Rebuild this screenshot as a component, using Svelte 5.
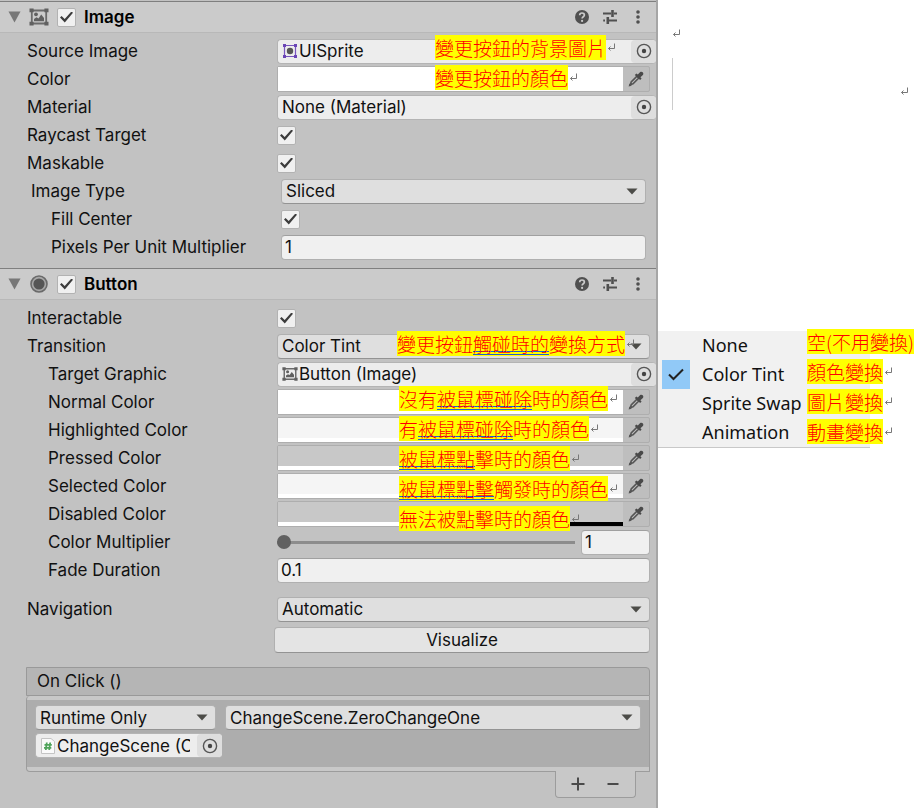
<script>
  let imageEnabled = true;
  let buttonEnabled = true;
  let raycastTarget = true;
  let maskable = true;
  let fillCenter = true;
  let interactable = true;

  let imageType = 'Sliced';
  let pixelsPerUnit = '1';
  let transition = 'Color Tint';
  let multiplier = 1;
  let fadeDuration = '0.1';
  let navigation = 'Automatic';
  let callState = 'Runtime Only';
  let callTarget = 'ChangeScene.ZeroChangeOne';

  const transitions = ['None', 'Color Tint', 'Sprite Swap', 'Animation'];

  const colors = [
    { name: 'Normal Color', value: '#ffffff', alpha: 100 },
    { name: 'Highlighted Color', value: '#f5f5f5', alpha: 100 },
    { name: 'Pressed Color', value: '#c8c8c8', alpha: 100 },
    { name: 'Selected Color', value: '#f5f5f5', alpha: 100 },
    { name: 'Disabled Color', value: '#c8c8c8', alpha: 50 }
  ];

  // each note is [plain, underlined, plain]
  const imageNotes = [
    ['變更按鈕的背景圖片', '', ''],
    ['變更按鈕的顏色', '', '']
  ];
  const transitionNotes = [['變更按鈕', '觸碰時的', '變換方式']];
  const colorNotes = [
    ['沒有', '被鼠標碰除', '時的顏色'],
    ['有', '被鼠標碰除', '時的顏色'],
    ['', '被鼠標點', '擊時的顏色'],
    ['', '被鼠標點擊', '觸發時的顏色'],
    ['無法被點擊時的顏色', '', '']
  ];
  const menuNotes = [
    ['空(不用變換)', '', ''],
    ['顏色變換', '', ''],
    ['圖片變換', '', ''],
    ['動畫變換', '', '']
  ];
</script>

{#snippet returnMark()}
  <svg class="mark" width="8" height="9" viewBox="0 0 8 9" aria-hidden="true">
    <path d="M7.5 0.5V5.5H1.5M3.5 3.5L1.5 5.5L3.5 7.5" />
  </svg>
{/snippet}

{#snippet notes(list, place)}
  <ul class="notes {place}">
    {#each list as [before, marked, after]}
      <li>
        <span class="note">{before}{#if marked}<u>{marked}</u>{/if}{after}</span>{@render returnMark()}
      </li>
    {/each}
  </ul>
{/snippet}

{#snippet arrow()}
  <svg class="arrow" width="12" height="7" viewBox="0 0 12 7" aria-hidden="true">
    <path d="M0.5 0.5H11.5L6 6.5Z" />
  </svg>
{/snippet}

{#snippet picker(name)}
  <button class="picker" aria-label={name}>
    <svg width="16" height="16" viewBox="0 0 16 16">
      <circle cx="8" cy="8" r="6.6" fill="none" stroke="#555" stroke-width="1.4" />
      <circle cx="8" cy="8" r="2.2" fill="#444" />
    </svg>
  </button>
{/snippet}

{#snippet dropper(name)}
  <button class="dropper" aria-label={name}>
    <svg width="16" height="16" viewBox="0 0 16 16">
      <path d="M9 5.2L10.8 7L5 12.8L2.4 13.6L3.2 11Z" fill="none" stroke="#555" stroke-width="1.6" />
      <path d="M0.6 15.6L1.4 12.4L3.8 14.8Z" fill="#555" />
      <path d="M6.8 3.9L8.4 2.4L9.8 3.6L12.2 1.1C13.8 -0.4 16.4 2 14.9 3.9L12.4 6.2L13.6 7.6L12.1 9.1Z" fill="#4a4a4a" />
    </svg>
  </button>
{/snippet}

{#snippet imageIcon(size)}
  <svg width={size} height={size} viewBox="0 0 20 20" aria-hidden="true">
    <path d="M3 3.5H17M3 16.5H17M2.8 4V16M17.2 4V16" stroke="#6a6a6a" stroke-width="1.8" />
    <path d="M0.5 1.5H4.6V5.2H0.5ZM15.4 1.5H19.5V5.2H15.4ZM0.5 14.8H4.6V18.5H0.5ZM15.4 14.8H19.5V18.5H15.4Z" fill="#606060" />
    <circle cx="7" cy="7.3" r="1.9" fill="#606060" />
    <path d="M5 14.2V12L7.5 10.2L9.5 11.4L12.2 7.4L15 11V14.2Z" fill="#606060" />
  </svg>
{/snippet}

{#snippet tools(name)}
  <div class="tools">
    <button aria-label="{name} help">
      <svg width="16" height="16" viewBox="0 0 16 16">
        <circle cx="8" cy="8" r="7" fill="#505050" />
        <path d="M5.7 6.3C5.7 3.2 10.4 3.3 10.4 6.1C10.4 7.8 8.1 7.7 8.1 9.6" fill="none" stroke="#cbcbcb" stroke-width="1.7" />
        <circle cx="8.1" cy="11.9" r="1.1" fill="#cbcbcb" />
      </svg>
    </button>
    <button aria-label="{name} presets">
      <svg width="16" height="16" viewBox="0 0 16 16">
        <path d="M1 4.5H9M12 4.5H15M1.2 11.5H3M7 11.5H15" stroke="#505050" stroke-width="1.8" />
        <path d="M10.5 1V8M5.8 8V15" stroke="#505050" stroke-width="2.6" />
      </svg>
    </button>
    <button aria-label="{name} menu">
      <svg width="16" height="16" viewBox="0 0 16 16">
        <circle cx="8" cy="3" r="1.8" fill="#505050" />
        <circle cx="8" cy="8" r="1.8" fill="#505050" />
        <circle cx="8" cy="13" r="1.8" fill="#505050" />
      </svg>
    </button>
  </div>
{/snippet}

{#snippet foldout(name)}
  <button class="foldout" aria-label="Fold {name}">
    <svg width="13" height="12" viewBox="0 0 13 12"><path d="M0.5 0.5H12.5L6.5 11.5Z" fill="#777" /></svg>
  </button>
{/snippet}

<div class="page">
  <main class="inspector">
    <section>
      <header>
        {@render foldout('Image')}
        {@render imageIcon(20)}
        <input type="checkbox" id="image-enabled" bind:checked={imageEnabled} />
        <h2><label for="image-enabled">Image</label></h2>
        {@render tools('Image')}
      </header>

      <div class="body">
        <div class="row">
          <span class="label">Source Image</span>
          <div class="object">
            <svg width="16" height="16" viewBox="0 0 16 16" aria-hidden="true">
              <path d="M2.5 2.5H13.5V13.5H2.5Z" fill="none" stroke="#7a55c0" stroke-width="1.2" />
              <path d="M1 1H4V4H1ZM12 1H15V4H12ZM1 12H4V15H1ZM12 12H15V15H12Z" fill="#6a45b5" />
              <circle cx="8" cy="8" r="3.2" fill="#555" />
            </svg>
            <span class="object-name">UISprite</span>
            {@render picker('Pick source image')}
          </div>
        </div>
        <div class="row">
          <span class="label">Color</span>
          <div class="color">
            <button class="swatch" aria-label="Color" style="background: #ffffff"></button>
            {@render dropper('Sample color')}
          </div>
        </div>
        <div class="row">
          <span class="label">Material</span>
          <div class="object">
            <span class="object-name">None (Material)</span>
            {@render picker('Pick material')}
          </div>
        </div>
        <div class="row">
          <label for="raycast">Raycast Target</label>
          <input type="checkbox" id="raycast" bind:checked={raycastTarget} />
        </div>
        <div class="row">
          <label for="maskable">Maskable</label>
          <input type="checkbox" id="maskable" bind:checked={maskable} />
        </div>
        <div class="row inset">
          <label for="image-type">Image Type</label>
          <div class="select">
            <select id="image-type" bind:value={imageType}>
              <option>Sliced</option>
            </select>
            {@render arrow()}
          </div>
        </div>
        <div class="row inset">
          <label class="child" for="fill-center">Fill Center</label>
          <input type="checkbox" id="fill-center" bind:checked={fillCenter} />
        </div>
        <div class="row inset">
          <label class="child" for="ppu">Pixels Per Unit Multiplier</label>
          <input type="text" id="ppu" bind:value={pixelsPerUnit} />
        </div>
        {@render notes(imageNotes, 'over-image')}
      </div>
    </section>

    <section>
      <header>
        {@render foldout('Button')}
        <svg width="20" height="20" viewBox="0 0 20 20" aria-hidden="true">
          <circle cx="10" cy="10" r="8" fill="#a8a8a8" stroke="#6a6a6a" stroke-width="1.6" />
          <circle cx="10" cy="10" r="5.6" fill="#555" />
        </svg>
        <input type="checkbox" id="button-enabled" bind:checked={buttonEnabled} />
        <h2><label for="button-enabled">Button</label></h2>
        {@render tools('Button')}
      </header>

      <div class="body">
        <div class="row">
          <label for="interactable">Interactable</label>
          <input type="checkbox" id="interactable" bind:checked={interactable} />
        </div>
        <div class="row">
          <label for="transition">Transition</label>
          <div class="select">
            <select id="transition" bind:value={transition}>
              {#each transitions as name}
                <option>{name}</option>
              {/each}
            </select>
            {@render arrow()}
            {@render notes(transitionNotes, 'over-field')}
          </div>
        </div>
        <div class="row">
          <span class="label sub">Target Graphic</span>
          <div class="object">
            {@render imageIcon(16)}
            <span class="object-name">Button (Image)</span>
            {@render picker('Pick target graphic')}
          </div>
        </div>
        <div class="colors">
          {#each colors as color}
            <div class="row">
              <span class="label sub">{color.name}</span>
              <div class="color">
                <button class="swatch" aria-label={color.name} style="background: {color.value}">
                  <span class="alpha"><span style="width: {color.alpha}%"></span></span>
                </button>
                {@render dropper('Sample ' + color.name)}
              </div>
            </div>
          {/each}
          {@render notes(colorNotes, 'over-colors')}
        </div>
        <div class="row">
          <label class="sub" for="multiplier">Color Multiplier</label>
          <div class="slider">
            <input type="range" id="multiplier" min="1" max="5" step="0.1" bind:value={multiplier} />
            <input type="text" aria-label="Color Multiplier value" bind:value={multiplier} />
          </div>
        </div>
        <div class="row">
          <label class="sub" for="fade">Fade Duration</label>
          <input type="text" id="fade" bind:value={fadeDuration} />
        </div>
        <div class="row navigation">
          <label for="navigation">Navigation</label>
          <div class="select">
            <select id="navigation" bind:value={navigation}>
              <option>Automatic</option>
            </select>
            {@render arrow()}
          </div>
        </div>
        <button class="visualize">Visualize</button>

        <div class="event">
          <h3>On Click ()</h3>
          <div class="calls">
            <div class="call">
              <div class="select">
                <select aria-label="Call state" bind:value={callState}>
                  <option>Runtime Only</option>
                </select>
                {@render arrow()}
              </div>
              <div class="select">
                <select aria-label="Function" bind:value={callTarget}>
                  <option>ChangeScene.ZeroChangeOne</option>
                </select>
                {@render arrow()}
              </div>
              <div class="object">
                <svg width="16" height="18" viewBox="0 0 16 18" aria-hidden="true">
                  <path d="M1.5 1.5H11L14.5 4.5V16.5H1.5Z" fill="#fafafa" stroke="#c4c4c4" />
                  <path d="M6.8 5.5L5.8 13M10.2 5.5L9.2 13M4.5 7.8H11.8M4 10.8H11.3" stroke="#4fa35a" stroke-width="1.8" />
                </svg>
                <span class="object-name">ChangeScene (C</span>
                {@render picker('Pick call target')}
              </div>
            </div>
          </div>
          <div class="event-tools">
            <button aria-label="Add call">
              <svg width="14" height="14" viewBox="0 0 14 14"><path d="M7 0.5V13.5M0.5 7H13.5" /></svg>
            </button>
            <button aria-label="Remove call">
              <svg width="14" height="14" viewBox="0 0 14 14"><path d="M1.5 7H12.5" /></svg>
            </button>
          </div>
        </div>
      </div>
    </section>
  </main>

  <aside>
    <div class="blank">
      <p>{@render returnMark()}</p>
      <p class="ruled">{@render returnMark()}</p>
    </div>
    <div class="menu" role="menu" aria-label="Transition">
      {#each transitions as name}
        <button role="menuitemradio" aria-checked={name === transition} on:click={() => (transition = name)}>
          <span class="tick">
            {#if name === transition}
              <svg width="16" height="13" viewBox="0 0 16 13"><path d="M1 6.5L5.5 11L15 1.5" /></svg>
            {/if}
          </span>
          {name}
        </button>
      {/each}
      {@render notes(menuNotes, 'over-menu')}
    </div>
  </aside>
</div>

<style>
  :global(body) {
    background: #fff;
  }

  .page {
    display: grid;
    grid-template-columns: minmax(0, 1fr) 258px;
    min-height: 100vh;
    overflow: hidden;
    font: 17px/20px Inter, 'Noto Sans CJK TC', sans-serif;
    color: #111;
  }

  button,
  input,
  select {
    box-sizing: border-box;
    margin: 0;
    font: inherit;
    color: inherit;
  }

  button {
    padding: 0;
    border: 0;
    background: none;
  }

  svg {
    display: block;
    flex: none;
  }

  .inspector {
    padding-top: 1px;
    background: #c2c2c2;
    border-right: 2px solid #a6a6a6;
  }

  header {
    display: flex;
    align-items: center;
    gap: 8px;
    box-sizing: border-box;
    height: 32px;
    padding: 0 4px 0 8px;
    background: #cbcbcb;
    border-top: 1px solid #7f7f7f;
    border-bottom: 1px solid #b8b8b8;
  }

  h2,
  h3 {
    margin: 0;
    font-size: 17px;
  }

  h2 {
    flex: 1;
    font-weight: 600;
    color: #000;
  }

  h3 {
    font-weight: 400;
  }

  .tools {
    display: flex;
  }

  .tools button {
    display: flex;
    justify-content: center;
    width: 28px;
  }

  .body {
    position: relative;
    padding: 4px 6px 7px 27px;
  }

  .row {
    display: grid;
    grid-template-columns: 250px minmax(0, 1fr);
    align-items: center;
    height: 28px;
  }

  .inset {
    padding: 0 4px;
  }

  .child {
    padding-left: 20px;
  }

  .sub {
    padding-left: 21px;
  }

  input[type='checkbox'] {
    appearance: none;
    width: 19px;
    height: 19px;
    background: #f0f0f0;
    border: 1px solid #b2b2b2;
    border-radius: 2px;
  }

  input[type='checkbox']:checked::before {
    content: '';
    display: block;
    width: 13px;
    height: 11px;
    margin: 3px 2px;
    background: #3c3c3c;
    clip-path: polygon(0 55%, 12% 42%, 36% 68%, 88% 0, 100% 12%, 37% 100%);
  }

  input[type='text'] {
    width: 100%;
    height: 25px;
    padding: 0 3px;
    background: #f0f0f0;
    border: 1px solid #b0b0b0;
    border-top-color: #a0a0a0;
    border-radius: 4px;
  }

  .select {
    position: relative;
  }

  select {
    display: block;
    appearance: none;
    width: 100%;
    height: 25px;
    padding: 0 24px 0 4px;
    background: #dfdfdf;
    border: 1px solid #b0b0b0;
    border-bottom-color: #939393;
    border-radius: 4px;
  }

  .arrow {
    position: absolute;
    top: 9px;
    right: 8px;
    fill: #4c4c48;
    pointer-events: none;
  }

  .object {
    display: flex;
    align-items: center;
    gap: 1px;
    box-sizing: border-box;
    height: 25px;
    margin-right: -6px;
    padding-left: 4px;
    background: #ededed;
    border: 1px solid #b4b4b4;
    border-right: 0;
    border-radius: 4px;
  }

  .object-name {
    flex: 1;
    min-width: 0;
    overflow: hidden;
    white-space: nowrap;
  }

  .picker {
    display: flex;
    align-items: center;
    justify-content: center;
    width: 25px;
    height: 23px;
    background: #dedede;
    border-radius: 4px;
  }

  .call .picker {
    margin-left: 6px;
  }

  .color {
    display: flex;
    box-sizing: border-box;
    height: 26px;
    border: 1px solid #aeaeae;
    border-radius: 2px;
    background: #bebebe;
  }

  .swatch {
    display: flex;
    flex: 1;
    align-items: flex-end;
  }

  .alpha {
    flex: 1;
    height: 4px;
    background: #000;
  }

  .alpha span {
    display: block;
    height: 4px;
    background: #fff;
  }

  .dropper {
    display: flex;
    align-items: center;
    justify-content: center;
    width: 26px;
  }

  .colors {
    position: relative;
  }

  .slider {
    display: grid;
    grid-template-columns: minmax(0, 1fr) 69px;
    gap: 6px;
    align-items: center;
  }

  input[type='range'] {
    appearance: none;
    width: 100%;
    height: 14px;
    background: linear-gradient(#8c8c8c, #8c8c8c) center / 100% 3px no-repeat;
  }

  input[type='range']::-webkit-slider-thumb {
    appearance: none;
    width: 14px;
    height: 14px;
    background: #616161;
    border-radius: 50%;
  }

  .navigation {
    margin-top: 11px;
  }

  .visualize {
    display: block;
    width: calc(100% - 247px);
    height: 26px;
    margin: 4px 0 0 247px;
    background: #e4e4e4;
    border: 1px solid #b0b0b0;
    border-bottom-color: #939393;
    border-radius: 4px;
  }

  .event {
    margin: 14px 0 0 -1px;
  }

  .event h3 {
    padding: 3px 10px 4px;
    background: #b5b5b5;
    border: 1px solid #999;
    border-radius: 0 4px 0 0;
  }

  .calls {
    padding: 4px 0;
    background: #c8c8c8;
    border: 1px solid #9c9c9c;
    border-top: 0;
    border-radius: 4px 0 0 4px;
  }

  .call {
    display: grid;
    grid-template-columns: 181px minmax(0, 1fr);
    gap: 3px 9px;
    padding: 5px 8px 9px;
    background: #adadad;
  }

  .event-tools {
    display: flex;
    justify-content: center;
    box-sizing: border-box;
    width: 81px;
    height: 27px;
    margin: -1px 14px 0 auto;
    background: #c8c8c8;
    border: 1px solid #9c9c9c;
    border-top: 0;
    border-radius: 0 0 4px 4px;
  }

  .event-tools button {
    display: flex;
    align-items: center;
    justify-content: center;
    width: 35px;
  }

  .event-tools path {
    stroke: #4a4a4a;
    stroke-width: 2;
  }

  .blank {
    box-sizing: border-box;
    height: 331px;
    padding: 29px 8px 0 14px;
  }

  .blank p {
    margin: 0;
  }

  .blank .ruled {
    box-sizing: border-box;
    display: flex;
    align-items: flex-end;
    justify-content: flex-end;
    height: 52px;
    margin-top: 20px;
    padding-bottom: 14px;
    border-left: 1px solid #ccc;
  }

  .mark {
    fill: none;
    stroke: #777;
  }

  .menu {
    position: relative;
    width: 212px;
    background: #f1f1f1;
    border-bottom: 1px solid #c8c8c8;
    font: 18px/29px 'Noto Sans', 'Noto Sans CJK TC', sans-serif;
  }

  .menu button {
    display: flex;
    gap: 12px;
    width: 100%;
    padding-left: 4px;
    white-space: nowrap;
  }

  .tick {
    display: flex;
    align-items: center;
    justify-content: center;
    width: 28px;
    height: 29px;
  }

  .menu button[aria-checked='true'] .tick {
    background: #91c9f7;
  }

  .tick path {
    fill: none;
    stroke: #222;
    stroke-width: 2;
  }

  .notes {
    position: absolute;
    display: grid;
    gap: 5px;
    margin: 0;
    padding: 0;
    list-style: none;
    font: 300 19px/25px 'Noto Sans CJK TC', sans-serif;
    color: #f00;
    white-space: nowrap;
    pointer-events: none;
  }

  .notes li {
    display: flex;
    align-items: center;
    gap: 1px;
  }

  .note {
    height: 25px;
    background: #ff0;
  }

  .note u {
    display: inline-block;
    box-sizing: border-box;
    height: 24px;
    border-bottom: 4px double #1f5fd0;
    text-decoration: none;
    vertical-align: top;
  }

  .over-image {
    top: 2px;
    left: 435px;
  }

  .over-field {
    top: -3px;
    left: 120px;
  }

  .over-colors {
    top: -2px;
    left: 372px;
  }

  .over-menu {
    top: -2px;
    left: 149px;
  }
</style>
